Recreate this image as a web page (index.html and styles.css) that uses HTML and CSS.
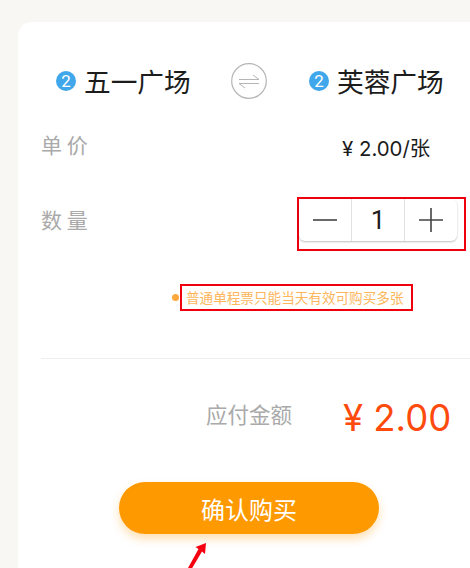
FILE: index.html
```html
<!DOCTYPE html>
<html lang="zh-CN">
<head>
    <meta charset="UTF-8">
    <meta name="viewport" content="width=device-width, initial-scale=1.0">
    <title>确认购买</title>
    <link rel="stylesheet" href="styles.css">
</head>
<body>
    <div class="card">
        <div class="stations">
            <div class="station">
                <span class="line-badge">2</span>
                <span class="station-name">五一广场</span>
            </div>
            <svg class="swap" width="36" height="36" viewBox="0 0 36 36" fill="none" stroke="#b5b5b5">
                <circle cx="18" cy="18" r="17.3" stroke-width="1.2"/>
                <path d="M8 16.500H28L22 12" stroke-width="1"/>
                <path d="M28 20.500H8L14 25" stroke-width="1"/>
            </svg>
            <div class="station station-right">
                <span class="line-badge">2</span>
                <span class="station-name">芙蓉广场</span>
            </div>
        </div>

        <div class="price-row">
            <span class="label">单 价</span>
            <span class="unit-price">¥ 2.00/张</span>
        </div>

        <div class="count-row">
            <span class="label">数 量</span>
            <div class="mark stepper-mark">
                <div class="stepper">
                    <div class="step">
                        <svg width="24" height="24" viewBox="0 0 24 24" stroke="#444" stroke-width="1.6"><path d="M0 12H24"/></svg>
                    </div>
                    <div class="step step-value">1</div>
                    <div class="step">
                        <svg width="24" height="24" viewBox="0 0 24 24" stroke="#444" stroke-width="1.6"><path d="M0 12H24M12 0V24"/></svg>
                    </div>
                </div>
            </div>
        </div>

        <div class="notice">
            <span class="dot"></span>
            <span class="mark notice-mark">普通单程票只能当天有效可购买多张</span>
        </div>

        <div class="total-row">
            <span class="total-label">应付金额</span>
            <span class="total-price">¥ 2.00</span>
        </div>

        <button class="buy-btn" type="button">确认购买</button>
    </div>

    <svg class="arrow" width="30" height="30" viewBox="0 0 30 30" fill="#f4000f">
        <path d="M18 0L17 11L14 8.5L3 27L0 25L10.500 6L7.500 4Z"/>
    </svg>
</body>
</html>
```

FILE: styles.css
```css
html, body {
    margin: 0;
    padding: 0;
}

body {
    position: relative;
    width: 470px;
    height: 568px;
    overflow: hidden;
    background: #f8f7f3;
    font-family: "Noto Sans CJK SC", "Liberation Sans", sans-serif;
}

.card {
    box-sizing: border-box;
    height: 546px;
    margin: 22px 0 0 18px;
    padding: 41px 0 0 23px;
    background: #fff;
    border-top-left-radius: 14px;
}

.stations {
    display: flex;
    align-items: center;
    height: 36px;
    padding-left: 15px;
}

.station {
    display: flex;
    flex: none;
    align-items: center;
    gap: 8px;
    width: 175px;
}

.station-right {
    margin-left: 42px;
}

.swap {
    flex: none;
}

.line-badge {
    width: 20px;
    height: 20px;
    border-radius: 50%;
    background: #40a7ea;
    color: #fff;
    font-family: Roboto, sans-serif;
    font-size: 17px;
    line-height: 20px;
    text-align: center;
}

.station-name {
    font-size: 26.7px;
    line-height: 36px;
    color: #1c1c1c;
    white-space: nowrap;
}

.price-row {
    display: flex;
    height: 40px;
    margin-top: 27px;
    align-items: center;
}

.label {
    width: 301px;
    font-size: 21px;
    color: #aaa;
}

.price-row .label {
    margin-top: -4px;
}

.unit-price {
    margin-top: 2px;
    font-family: Inter, "Noto Sans CJK SC", sans-serif;
    font-size: 20.4px;
    color: #1c1c1c;
    white-space: nowrap;
}

.count-row {
    display: flex;
    align-items: center;
    height: 54px;
    margin-top: 31px;
}

.count-row .label {
    width: 256px;
    margin-top: -10px;
}

.mark {
    box-sizing: border-box;
    border: 2px solid #f0000f;
}

.stepper-mark {
    width: 169px;
    height: 54px;
}

.stepper {
    display: flex;
    width: 158px;
    height: 42px;
    border-radius: 6px;
    background: #fff;
    box-shadow: 0 1px 2px rgba(0, 0, 0, 0.25);
}

.step {
    display: flex;
    flex: none;
    box-sizing: border-box;
    width: 52px;
    align-items: center;
    justify-content: center;
}

.step-value {
    width: 54px;
    border-left: 1px solid #e2e2e2;
    border-right: 1px solid #e2e2e2;
    font-family: Roboto, sans-serif;
    font-size: 26px;
    color: #1c1c1c;
}

.notice {
    display: flex;
    align-items: center;
    gap: 1px;
    height: 27px;
    margin-top: 33px;
    padding-left: 131px;
}

.dot {
    width: 7px;
    height: 7px;
    border-radius: 50%;
    background: #fda83c;
}

.notice-mark {
    display: block;
    width: 233px;
    height: 27px;
    padding-left: 4px;
    font-size: 13.6px;
    line-height: 23px;
    color: #fdb65c;
    white-space: nowrap;
}

.total-row {
    display: flex;
    align-items: center;
    height: 62px;
    margin-top: 47px;
    padding-top: 23px;
    padding-left: 165px;
    border-top: 1px solid #eee;
}

.total-label {
    width: 137px;
    font-size: 21.5px;
    color: #aaa;
}

.total-price {
    margin-top: 9px;
    font-family: Inter, sans-serif;
    font-size: 36.5px;
    font-weight: 400;
    color: #ff4a0d;
    white-space: nowrap;
}

.buy-btn {
    display: block;
    width: 260px;
    height: 52px;
    margin: 38px 0 0 78px;
    padding: 0;
    border: none;
    border-radius: 26px;
    background: #ff9900;
    box-shadow: 0 5px 10px rgba(255, 153, 0, 0.3);
    color: #fff;
    font-family: inherit;
    font-size: 24px;
}

/* red annotation arrow on top of the screenshot */
.arrow {
    position: absolute;
    left: 188px;
    top: 543px;
}
```
